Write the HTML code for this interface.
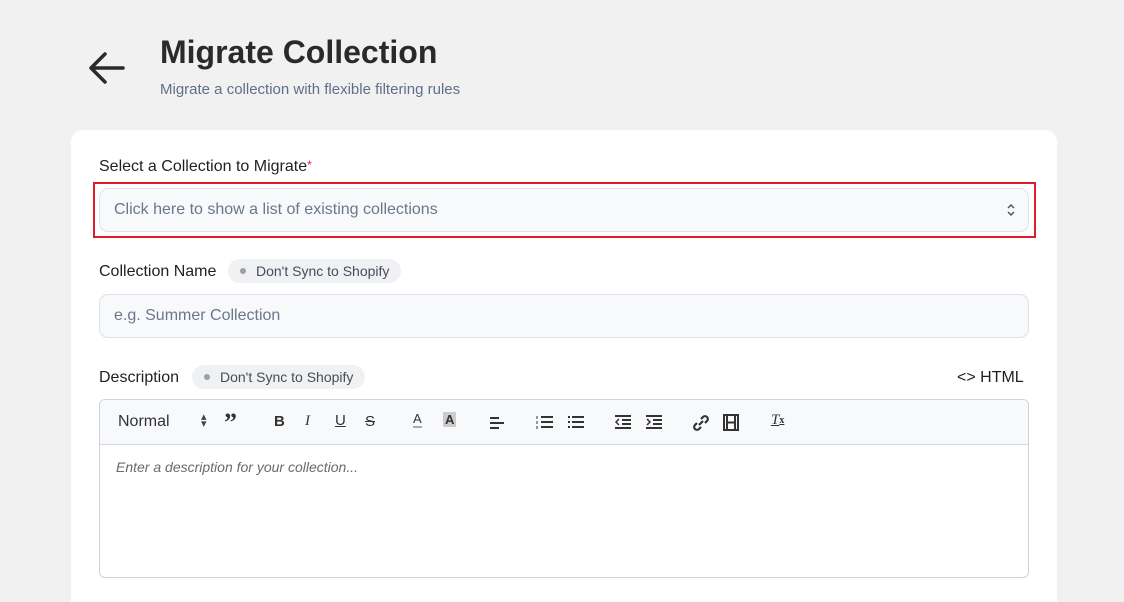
<!DOCTYPE html>
<html style="overflow:hidden"><head><style>
*{box-sizing:border-box;margin:0;padding:0}
html,body{width:1124px;height:602px;overflow:hidden}
body{background:#f1f1f1;font-family:"Liberation Sans",sans-serif;position:relative;color:#1f2328}
.abs{position:absolute}
h1{position:absolute;left:160px;top:34px;font-size:32px;font-weight:700;color:#2a2a2a;letter-spacing:0px}
.sub{left:160px;top:81px;font-size:15px;color:#5f6f86}
.card{left:71px;top:130px;width:986px;height:472px;background:#fff;border-radius:12px 12px 0 0}
.lbl{font-size:16px;color:#1d2125}
.inp{left:99px;width:930px;background:#f8f9fb;border:1px solid #dde2ea;border-radius:9px;font-size:16px;color:#6b778a;padding-left:14px;display:flex;align-items:center}
.pill{height:24px;background:#f0f1f3;border-radius:12px;font-size:14px;color:#474d57;display:flex;align-items:center;padding:0 12px 0 12px}
.pill i{width:6px;height:6px;border-radius:50%;background:#9aa0a8;margin-right:10px;display:inline-block}
.tb{font-size:15px;color:#333;display:flex;align-items:center}
</style></head><body>
<svg class="abs" style="left:86px;top:50px" width="40" height="36" viewBox="0 0 40 36"><path d="M37 18H5M19 4L5 18l14 14" stroke="#2a2a2a" stroke-width="3.5" fill="none" stroke-linecap="round" stroke-linejoin="round"/></svg>
<h1>Migrate Collection</h1>
<div class="abs sub">Migrate a collection with flexible filtering rules</div>
<div class="abs card"></div>
<div class="abs lbl" style="left:99px;top:158px">Select a Collection to Migrate<span style="color:#e11d48;font-size:12px;vertical-align:top">*</span></div>
<div class="abs" style="left:93px;top:182px;width:943px;height:56px;border:2px solid #e21b2a"></div>
<div class="abs inp" style="top:188px;height:44px">Click here to show a list of existing collections</div>
<svg class="abs" style="left:1005px;top:202px" width="12" height="16" viewBox="0 0 12 16"><path d="M3 6l3-3 3 3M3 10l3 3 3-3" stroke="#555" stroke-width="1.5" fill="none"/></svg>
<div class="abs lbl" style="left:99px;top:263px">Collection Name</div>
<div class="abs pill" style="left:228px;top:259px"><i></i>Don't Sync to Shopify</div>
<div class="abs inp" style="top:294px;height:44px">e.g. Summer Collection</div>
<div class="abs lbl" style="left:99px;top:369px">Description</div>
<div class="abs pill" style="left:192px;top:365px"><i></i>Don't Sync to Shopify</div>
<div class="abs" style="left:957px;top:369px;font-size:16px;color:#1d2125">&lt;&gt; HTML</div>
<div class="abs" style="left:99px;top:399px;width:930px;height:179px;border:1px solid #cfd3d8;border-radius:6px;overflow:hidden">
 <div style="height:45px;background:#f8f9fb;border-bottom:1px solid #d3d7dc;position:relative">
  <div class="abs tb" style="left:18px;top:13px;font-size:16px">Normal</div>
  <div class="abs" style="left:101px;top:14px;font-size:11px;color:#444;line-height:7px">▴<br>▾</div>
  <div class="abs" style="left:124px;top:8px;font-size:26px;font-weight:700;color:#333;font-family:'Liberation Serif',serif">”</div>
  <div class="abs tb" style="left:174px;top:13px;font-weight:700">B</div>
  <div class="abs tb" style="left:205px;top:13px;font-style:italic;font-family:'Liberation Serif',serif">I</div>
  <div class="abs tb" style="left:235px;top:12px;text-decoration:underline">U</div>
  <div class="abs tb" style="left:265px;top:13px;text-decoration:line-through">S</div>
  <div class="abs tb" style="left:313px;top:11px;font-size:13px;border-bottom:2px solid #aaa">A</div>
  <div class="abs tb" style="left:343px;top:12px;font-size:13px;font-weight:700;background:#ccc;padding:0 2px">A</div>
  <svg class="abs" style="left:389px;top:16px" width="16" height="14"><path d="M1 2h9M1 7h14M1 12h9" stroke="#333" stroke-width="2"/></svg>
  <svg class="abs" style="left:436px;top:15px" width="18" height="15"><path d="M5 2h12M5 7h12M5 12h12" stroke="#333" stroke-width="2"/><path d="M1 1v3M1 6v3M1 11v3" stroke="#333" stroke-width="1"/></svg>
  <svg class="abs" style="left:467px;top:15px" width="18" height="15"><path d="M5 2h12M5 7h12M5 12h12M1 2h2M1 7h2M1 12h2" stroke="#333" stroke-width="2"/></svg>
  <svg class="abs" style="left:514px;top:15px" width="18" height="15"><path d="M1 1h16M8 5h9M8 9h9M1 13h16" stroke="#333" stroke-width="2"/><path d="M5 4L2 7l3 3" stroke="#333" stroke-width="1.5" fill="none"/></svg>
  <svg class="abs" style="left:545px;top:15px" width="18" height="15"><path d="M1 1h16M8 5h9M8 9h9M1 13h16" stroke="#333" stroke-width="2"/><path d="M2 4l3 3-3 3" stroke="#333" stroke-width="1.5" fill="none"/></svg>
  <svg class="abs" style="left:592px;top:14px" width="18" height="18"><path d="M7 11l4-4M5 9l-2 2a2.8 2.8 0 004 4l2-2M13 9l2-2a2.8 2.8 0 00-4-4L9 5" stroke="#333" stroke-width="2.2" fill="none"/></svg>
  <svg class="abs" style="left:623px;top:14px" width="16" height="17"><rect x="1" y="1" width="14" height="15" fill="none" stroke="#333" stroke-width="2"/><path d="M4 1v15M12 1v15M4 8.5h8" stroke="#333" stroke-width="2"/></svg>
  <div class="abs tb" style="left:671px;top:12px;font-style:italic;text-decoration:underline;font-family:'Liberation Serif',serif">T<sub style="font-size:10px;font-style:normal;font-weight:700">x</sub></div>
 </div>
 <div style="padding:14px 16px;font-size:14px;font-style:italic;color:#6a6a6a">Enter a description for your collection...</div>
</div>
</body></html>
